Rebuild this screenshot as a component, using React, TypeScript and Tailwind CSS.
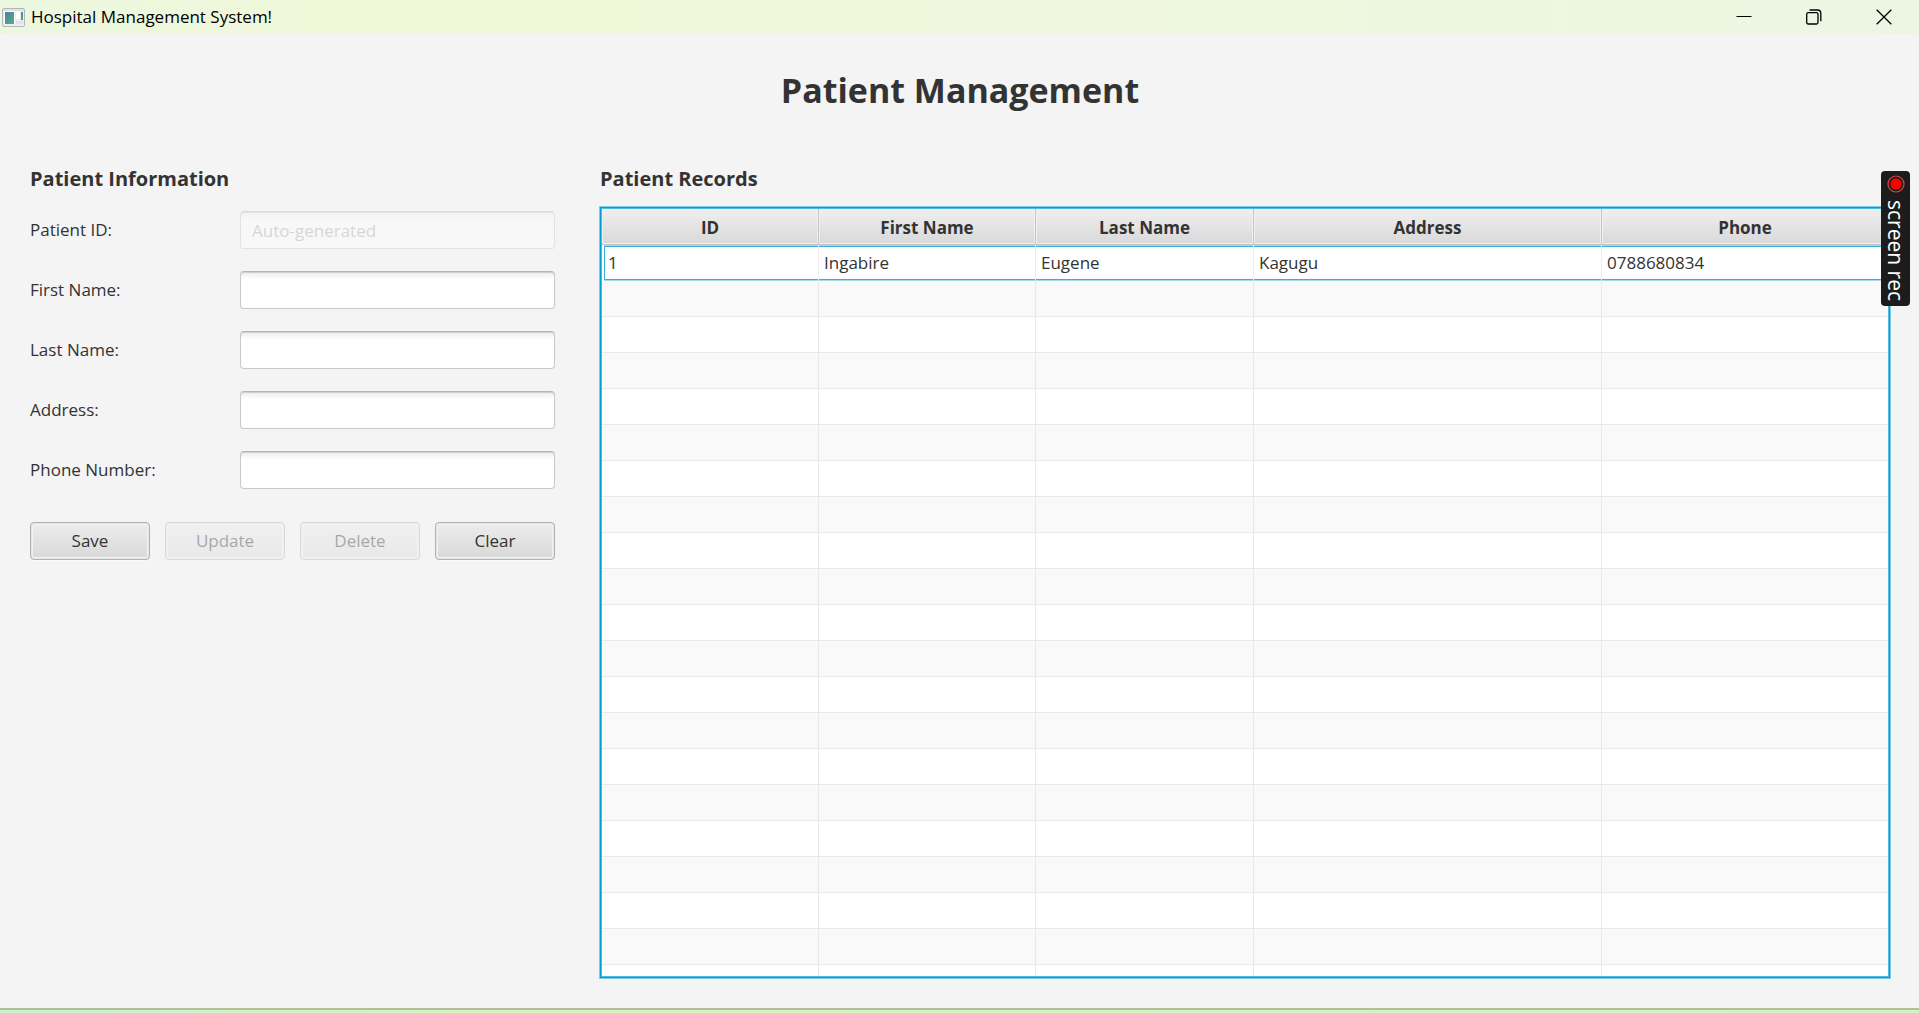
import React from "react";

const fields = [
  { id: "patient-id", label: "Patient ID:", placeholder: "Auto-generated", disabled: true },
  { id: "first-name", label: "First Name:" },
  { id: "last-name", label: "Last Name:" },
  { id: "address", label: "Address:" },
  { id: "phone", label: "Phone Number:" },
];

const actions = [
  { label: "Save", disabled: false },
  { label: "Update", disabled: true },
  { label: "Delete", disabled: true },
  { label: "Clear", disabled: false },
];

const columns = [
  { label: "ID", width: "w-[217px]" },
  { label: "First Name", width: "w-[217px]" },
  { label: "Last Name", width: "w-[218px]" },
  { label: "Address", width: "w-[348px]" },
  { label: "Phone", width: "" },
];

const record = ["1", "Ingabire", "Eugene", "Kagugu", "0788680834"];
const emptyRows = Array.from({ length: 20 }, (_, i) => i);

function AppIcon() {
  return (
    <svg width="23" height="19" viewBox="0 0 23 19" aria-hidden="true">
      <defs>
        <linearGradient id="pane" x1="0" y1="0" x2="1" y2="1">
          <stop offset="0" stopColor="#4a7fa6" />
          <stop offset="1" stopColor="#56b07c" />
        </linearGradient>
      </defs>
      <rect x="0.5" y="0.5" width="22" height="18" rx="1.5" fill="#eeeef1" stroke="#b3b5bd" />
      <path d="M1 2h21" stroke="#d4d5da" />
      <rect x="2" y="3" width="11" height="13" fill="#fff" />
      <rect x="3" y="4" width="9" height="12" fill="url(#pane)" />
      <rect x="14" y="4" width="4" height="7" fill="#fff" />
      <rect x="19" y="4" width="2" height="8" fill="url(#pane)" />
      <rect x="14" y="13" width="7" height="3" fill="#e2e3e7" />
    </svg>
  );
}

function TitleBar() {
  return (
    <header className="flex h-[34px] shrink-0 items-center bg-linear-to-r from-[#ebf7e0] via-[#f1f8d8] via-20% to-[#ebf7e3] pl-[2px]">
      <AppIcon />
      <span className="ml-[6px] grow text-[17px] leading-6 text-black">Hospital Management System!</span>
      <button aria-label="Minimize" className="flex h-full w-[70px] items-center justify-center">
        <svg width="16" height="16" viewBox="0 0 16 16" stroke="#000" aria-hidden="true">
          <path d="M0.5 7.5h15" />
        </svg>
      </button>
      <button aria-label="Restore" className="flex h-full w-[70px] items-center justify-center">
        <svg width="16" height="16" viewBox="0 0 16 16" fill="none" stroke="#000" strokeWidth="1.3" aria-hidden="true">
          <rect x="0.7" y="3.7" width="11.3" height="11.3" rx="1.5" />
          <path d="M3.5 1h8a3.3 3.3 0 0 1 3.3 3.3v8" />
        </svg>
      </button>
      <button aria-label="Close" className="flex h-full w-[70px] items-center justify-center">
        <svg width="16" height="16" viewBox="0 0 16 16" stroke="#000" strokeWidth="1.3" aria-hidden="true">
          <path d="M0.7 0.7l14.6 14.6M15.3 0.7L0.7 15.3" />
        </svg>
      </button>
    </header>
  );
}

function PatientForm() {
  return (
    <form className="w-[525px] shrink-0">
      <h2 className="text-[20px] font-bold leading-[30px]">Patient Information</h2>
      <div className="mt-[17px] flex flex-col gap-[22px]">
        {fields.map((f) => (
          <div key={f.id} className="flex items-center">
            <label htmlFor={f.id} className="w-[210px]">
              {f.label}
            </label>
            <input
              id={f.id}
              type="text"
              placeholder={f.placeholder}
              disabled={f.disabled}
              className="h-[38px] min-w-0 grow rounded-[4px] border border-[#c8c8c8] border-t-[#b5b5b5] bg-linear-to-b from-[#ececec] via-white via-20% to-white px-[11px] shadow-[inset_0_1px_0_#d0d0d0] outline-none placeholder:text-[#aaaaaa] disabled:opacity-40"
            />
          </div>
        ))}
      </div>
      <div className="mt-[33px] grid grid-cols-4 gap-[15px]">
        {actions.map((a) => (
          <button
            key={a.label}
            type="button"
            disabled={a.disabled}
            className="h-[38px] rounded-[4px] border border-[#b1b1b1] bg-linear-to-b from-[#ededed] to-[#d8d8d8] shadow-[inset_0_0_0_1px_#bebebe40,inset_0_0_0_2px_#f2f2f2,0_1px_0_#fafafa] disabled:opacity-40"
          >
            {a.label}
          </button>
        ))}
      </div>
    </form>
  );
}

function PatientRecords() {
  return (
    <section className="ml-[45px] flex min-w-0 grow flex-col">
      <h2 className="text-[20px] font-bold leading-[30px]">Patient Records</h2>
      <div className="mt-[13px] min-h-0 grow basis-0 overflow-hidden border border-[#039ed3] bg-[#4dbbe3] p-px shadow-[0_0_0_1px_#7ccbe7]">
        <div className="h-full overflow-hidden bg-white">
          <table className="w-full table-fixed border-separate border-spacing-0">
            <thead>
              <tr>
                {columns.map((c) => (
                  <th
                    key={c.label}
                    scope="col"
                    className={`${c.width} h-9 border-r border-b border-[#c4c4c4] bg-linear-to-b from-[#efefef] to-[#d9d9d9] p-0 pt-0.5 text-center font-bold shadow-[inset_0_0_0_1px_#f0f0f0] last:border-r-0`}
                  >
                    {c.label}
                  </th>
                ))}
              </tr>
            </thead>
            <tbody>
              <tr>
                {record.map((value) => (
                  <td key={value} className="group h-9 border-r border-[#ededed] p-0 last:border-r-0">
                    <div className="mt-px mb-px flex h-[34px] items-center border-y border-y-[#39aed8] pl-[5px] shadow-[0_-1px_0_#a5daee,0_1px_0_#a5daee] group-first:ml-[2px] group-first:border-l group-first:border-l-[#39aed8] group-first:pl-[3px]">
                      {value}
                    </div>
                  </td>
                ))}
              </tr>
              {emptyRows.map((row) => (
                <tr key={row} className="odd:bg-white even:bg-[#f9f9f9]">
                  {columns.map((c) => (
                    <td key={c.label} className="h-9 border-r border-b border-[#e9e9e9] p-0 last:border-r-0" />
                  ))}
                </tr>
              ))}
            </tbody>
          </table>
        </div>
      </div>
    </section>
  );
}

function RecorderTab() {
  return (
    <div className="absolute top-[171px] right-[9px] flex h-[135px] w-[29px] flex-col items-center rounded-[4px] bg-[#1c1c1c] pt-1">
      <svg width="18" height="18" viewBox="0 0 18 18" aria-hidden="true">
        <circle cx="9" cy="9" r="8" fill="none" stroke="#d84a4a" strokeWidth="1.2" />
        <circle cx="9" cy="9" r="5.7" fill="#ff0000" />
      </svg>
      <span className="mt-[7px] text-[21px] font-medium leading-[29px] whitespace-nowrap text-white [writing-mode:vertical-rl]">
        screen rec
      </span>
    </div>
  );
}

export default function App() {
  return (
    <div className="relative flex h-screen flex-col overflow-hidden bg-[#f4f4f4] font-['Open_Sans','Noto_Sans',sans-serif] text-[17px] leading-6 text-[#333333]">
      <TitleBar />
      <main className="flex min-h-0 grow flex-col pt-[31px] pr-[29px] pb-[30px] pl-[30px]">
        <h1 className="text-center text-[34px] font-bold leading-[50px]">Patient Management</h1>
        <div className="mt-[49px] flex min-h-0 grow">
          <PatientForm />
          <PatientRecords />
        </div>
      </main>
      <footer className="h-[5px] shrink-0 border-t-2 border-[#adbf9f] bg-linear-to-r from-[#cdf0cb] via-[#dcf0bc] via-25% to-[#d8f0c0]" />
      <RecorderTab />
    </div>
  );
}
